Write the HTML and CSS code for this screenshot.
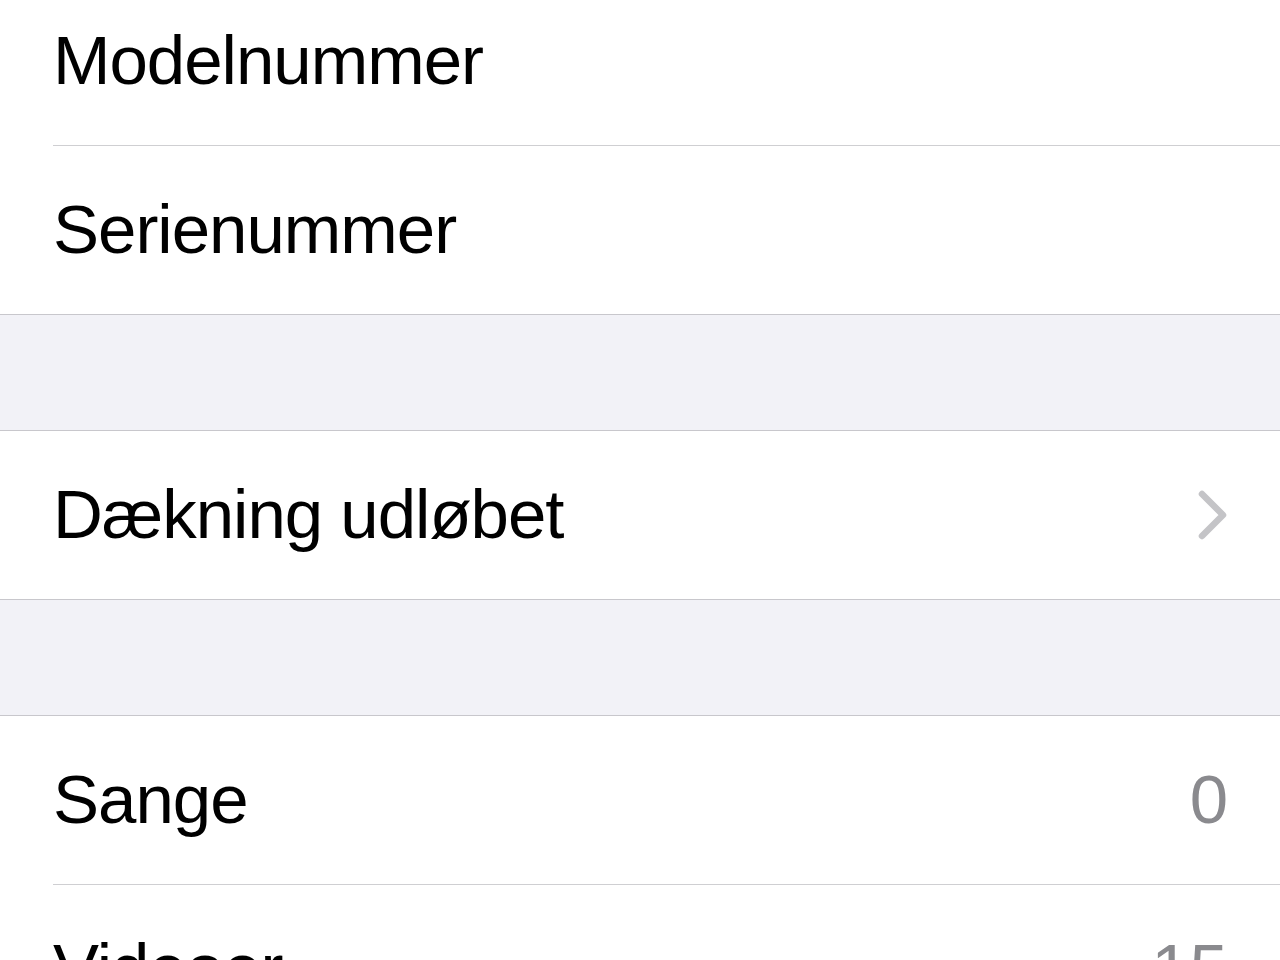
FILE: index.html
```html
<!DOCTYPE html>
<html lang="da">
<head>
<meta charset="utf-8">
<title>Om</title>
<link rel="stylesheet" href="styles.css">
</head>
<body>
<main class="page">
  <section class="group group-first">
    <div class="row"><div class="cell"><span class="label">Modelnummer</span><span class="value"></span></div></div>
    <div class="row"><div class="cell last"><span class="label">Serienummer</span><span class="value"></span></div></div>
  </section>
  <div class="spacer"></div>
  <section class="group">
    <div class="row"><div class="cell last"><span class="label">Dækning udløbet</span>
      <svg class="chevron" width="30" height="50" viewBox="0 0 30 50"><path d="M4 4 L25 25 L4 46" fill="none" stroke="#c4c4c7" stroke-width="6.5" stroke-linecap="round" stroke-linejoin="round"/></svg>
    </div></div>
  </section>
  <div class="spacer"></div>
  <section class="group">
    <div class="row"><div class="cell"><span class="label">Sange</span><span class="value">0</span></div></div>
    <div class="row"><div class="cell last"><span class="label">Videoer</span><span class="value">15</span></div></div>
  </section>
</main>
</body>
</html>
```
FILE: styles.css
```css
html, body {
  margin: 0;
  padding: 0;
  background: #ffffff;
  height: 100%;
  overflow: hidden;
}
.page {
  margin-top: -23px;
  font-family: "Liberation Sans", Arial, sans-serif;
  background: #f2f2f7;
}
.group {
  background: #ffffff;
  border-top: 1px solid #c8c7cc;
  border-bottom: 1px solid #c8c7cc;
}
.group-first {
  border-top: none;
}
.row {
  padding-left: 53px;
}
.cell {
  height: 168px;
  border-bottom: 1px solid #cfcfd2;
  display: flex;
  align-items: center;
  justify-content: space-between;
  padding-right: 54px;
  padding-left: 0;
}
.cell.last {
  border-bottom: none;
}
.label {
  font-size: 69px;
  color: #000000;
  letter-spacing: -1px;
  padding-bottom: 2px;
}
.value {
  font-size: 69px;
  color: #8a8a8e;
  margin-right: -2px;
  padding-bottom: 2px;
}
.chevron {
  display: block;
  margin-right: -2px;
}
.spacer {
  height: 115px;
}
```
